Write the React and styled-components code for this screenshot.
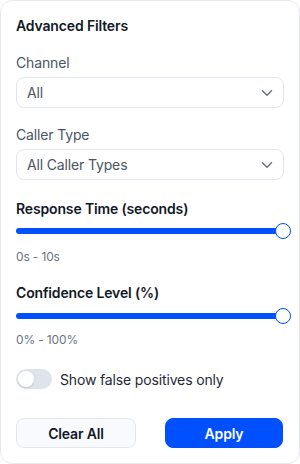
import React, { useState } from "react";
import styled, { createGlobalStyle } from "styled-components";
import { ChevronDown } from "lucide-react";

const Global = createGlobalStyle`
  html, body { margin: 0; padding: 0; background: #ffffff; }
  body { font-family: Inter, "Noto Sans", Arial, sans-serif; -webkit-font-smoothing: antialiased; letter-spacing: -0.15px; }
  * { box-sizing: border-box; }
`;

const Card = styled.div`
  width: 300px;
  height: 464px;
  background: #ffffff;
  border: 1px solid #e6e9ef;
  border-radius: 12px;
  padding: 15px 15px 0 15px;
  display: flex;
  flex-direction: column;
`;

const Title = styled.h3`
  margin: 0;
  font-size: 14px;
  line-height: 20px;
  font-weight: 600;
  color: #111827;
`;

const Section = styled.div`
  display: flex;
  flex-direction: column;
  margin-top: ${(p) => p.$mt}px;
`;

const Label = styled.label`
  font-size: 14px;
  line-height: 20px;
  color: ${(p) => (p.$strong ? "#111827" : "#4b5563")};
  font-weight: ${(p) => (p.$strong ? 600 : 400)};
`;

const SelectBox = styled.div`
  margin-top: 4px;
  height: 31px;
  border: 1px solid #e2e6ee;
  border-radius: 8px;
  display: flex;
  align-items: center;
  justify-content: space-between;
  padding: 0 7px 0 10px;
  font-size: 14px;
  color: #4b5563;
  background: #fff;
  svg { color: #6b7280; }
`;

const SliderWrap = styled.div`
  margin-top: ${(p) => p.$mt}px;
  position: relative;
  height: 16px;
  display: flex;
  align-items: center;
`;

const Track = styled.div`
  height: 6px;
  width: 100%;
  margin-right: 2px;
  border-radius: 3px;
  background: #0050ff;
`;

const Thumb = styled.div`
  position: absolute;
  right: -7px;
  top: 0;
  width: 16px;
  height: 16px;
  border-radius: 50%;
  background: #fff;
  border: 1.5px solid #0050ff;
`;

const Range = styled.div`
  margin-top: ${(p) => p.$mt}px;
  font-size: 12px;
  line-height: 16px;
  color: #6b7280;
`;

const ToggleRow = styled.div`
  margin-top: 21px;
  display: flex;
  align-items: center;
  gap: 8px;
  font-size: 14px;
  color: #1f2937;
`;

const Switch = styled.div`
  width: 36px;
  height: 20px;
  border-radius: 10px;
  background: #dfe4ec;
  padding: 2px;
  display: flex;
  align-items: center;
`;

const Knob = styled.div`
  width: 16px;
  height: 16px;
  border-radius: 50%;
  background: #fff;
  box-shadow: 0 1px 2px rgba(0, 0, 0, 0.15);
`;

const Buttons = styled.div`
  margin-top: 29px;
  display: flex;
  justify-content: space-between;
  margin-right: 1px;
`;

const Button = styled.button`
  width: ${(p) => p.$w}px;
  height: 30px;
  border-radius: 8px;
  font-family: inherit;
  letter-spacing: inherit;
  font-size: 14px;
  font-weight: 600;
  cursor: pointer;
  border: 1px solid ${(p) => (p.$primary ? "#0050ff" : "#e2e6ee")};
  background: ${(p) => (p.$primary ? "#0050ff" : "#f8fafc")};
  color: ${(p) => (p.$primary ? "#ffffff" : "#111827")};
`;

function Select({ value }) {
  return (
    <SelectBox>
      <span>{value}</span>
      <ChevronDown size={18} strokeWidth={2} />
    </SelectBox>
  );
}

function Slider({ mt }) {
  return (
    <SliderWrap $mt={mt}>
      <Track />
      <Thumb />
    </SliderWrap>
  );
}

export default function App() {
  const [on] = useState(false);
  return (
    <>
      <Global />
      <Card>
        <Title>Advanced Filters</Title>
        <Section $mt={17}>
          <Label>Channel</Label>
          <Select value="All" />
        </Section>
        <Section $mt={17}>
          <Label>Caller Type</Label>
          <Select value="All Caller Types" />
        </Section>
        <Section $mt={19}>
          <Label $strong>Response Time (seconds)</Label>
          <Slider mt={4} />
          <Range $mt={10}>0s - 10s</Range>
        </Section>
        <Section $mt={18}>
          <Label $strong>Confidence Level (%)</Label>
          <Slider mt={5} />
          <Range $mt={8}>0% - 100%</Range>
        </Section>
        <ToggleRow>
          <Switch>{!on && <Knob />}</Switch>
          <span>Show false positives only</span>
        </ToggleRow>
        <Buttons>
          <Button $w={120}>Clear All</Button>
          <Button $w={118} $primary>Apply</Button>
        </Buttons>
      </Card>
    </>
  );
}
